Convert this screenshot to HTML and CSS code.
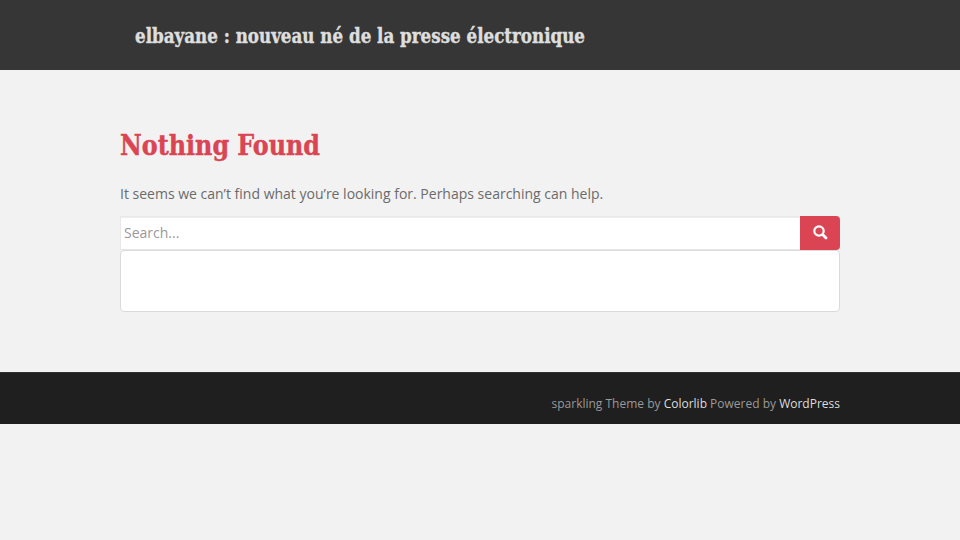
FILE: index.html
```html
<!DOCTYPE html>
<html lang="fr">
<head>
  <meta charset="UTF-8">
  <title>elbayane : nouveau né de la presse électronique</title>
  <link rel="stylesheet" href="styles.css">
</head>
<body>

<header class="navbar">
  <div class="container">
    <a class="navbar-brand" href="#"><svg class="brand-svg" width="690" height="32" role="img"><text x="0" y="23" textLength="450" lengthAdjust="spacingAndGlyphs">elbayane : nouveau né de la presse électronique</text></svg></a>
  </div>
</header>

<main class="container content">
  <h1 class="page-title"><svg class="title-svg" width="320" height="40" role="img"><text x="0" y="29" textLength="200" lengthAdjust="spacingAndGlyphs">Nothing Found</text></svg></h1>
  <p>It seems we can’t find what you’re looking for. Perhaps searching can help.</p>
  <form class="search-form">
    <input type="text" class="form-control" placeholder="Search...">
    <button type="button" class="btn-search" aria-label="Search">
      <svg width="15" height="15" viewBox="0 0 15 15"><circle cx="6" cy="6" r="4.7" fill="none" stroke="#fff" stroke-width="2.2"/><path d="M9.6 9.6l3.4 3.4" stroke="#fff" stroke-width="2.8" stroke-linecap="round"/></svg>
    </button>
  </form>
  <div class="well"></div>
</main>

<footer class="site-footer">
  <div class="container site-info">sparkling Theme by <a href="#">Colorlib</a> Powered by <a href="#">WordPress</a></div>
</footer>

</body>
</html>
```
FILE: styles.css
```css
* {
  box-sizing: border-box;
}
body {
  margin: 0;
  background: #f2f2f2;
  color: #6b6b6b;
  font-family: "Open Sans", sans-serif;
  font-size: 14px;
  line-height: 20px;
}
a {
  text-decoration: none;
}
.container {
  width: 720px;
  margin: 0 auto;
}
.navbar {
  height: 70px;
  background: #363636;
}
.navbar-brand {
  display: block;
  padding: 20px 15px;
}
.brand-svg, .title-svg {
  display: block;
  overflow: visible;
  font-family: "Roboto Slab", "DejaVu Serif Condensed", "DejaVu Serif", serif;
  font-weight: bold;
  font-stretch: condensed;
  stroke-width: .4px;
}
.brand-svg {
  font-size: 20px;
  fill: #dedede;
  stroke: #dedede;
}
.content {
  padding-top: 56px;
}
.page-title {
  margin: 0;
}
.title-svg {
  font-size: 27.5px;
  fill: #da4453;
  stroke: #da4453;
}
.content p {
  margin: 18px 0 12px;
}
.search-form {
  display: flex;
  height: 34px;
}
.form-control {
  flex: 1;
  padding: 0 3px 2px;
  border: 1px solid #e8e8e8;
  border-right: 0;
  box-shadow: inset 0 1px 1px rgba(0, 0, 0, .075);
  color: #555;
  font: 14px "Open Sans", sans-serif;
}
.form-control::placeholder {
  color: #999;
}
.btn-search {
  display: flex;
  align-items: center;
  justify-content: center;
  width: 40px;
  padding: 0 0 1px;
  border: 0;
  border-radius: 0 4px 4px 0;
  background: #da4453;
}
.well {
  height: 62px;
  border: 1px solid #dadada;
  border-radius: 4px;
  background: #fff;
}
.site-footer {
  height: 52px;
  margin-top: 60px;
  padding-top: 21px;
  border-top: 1px solid #2e2e2e;
  background: #1f1f1f;
}
.site-info {
  color: #999;
  font-size: 12px;
  text-align: right;
}
.site-info a {
  color: #dedede;
}
```
